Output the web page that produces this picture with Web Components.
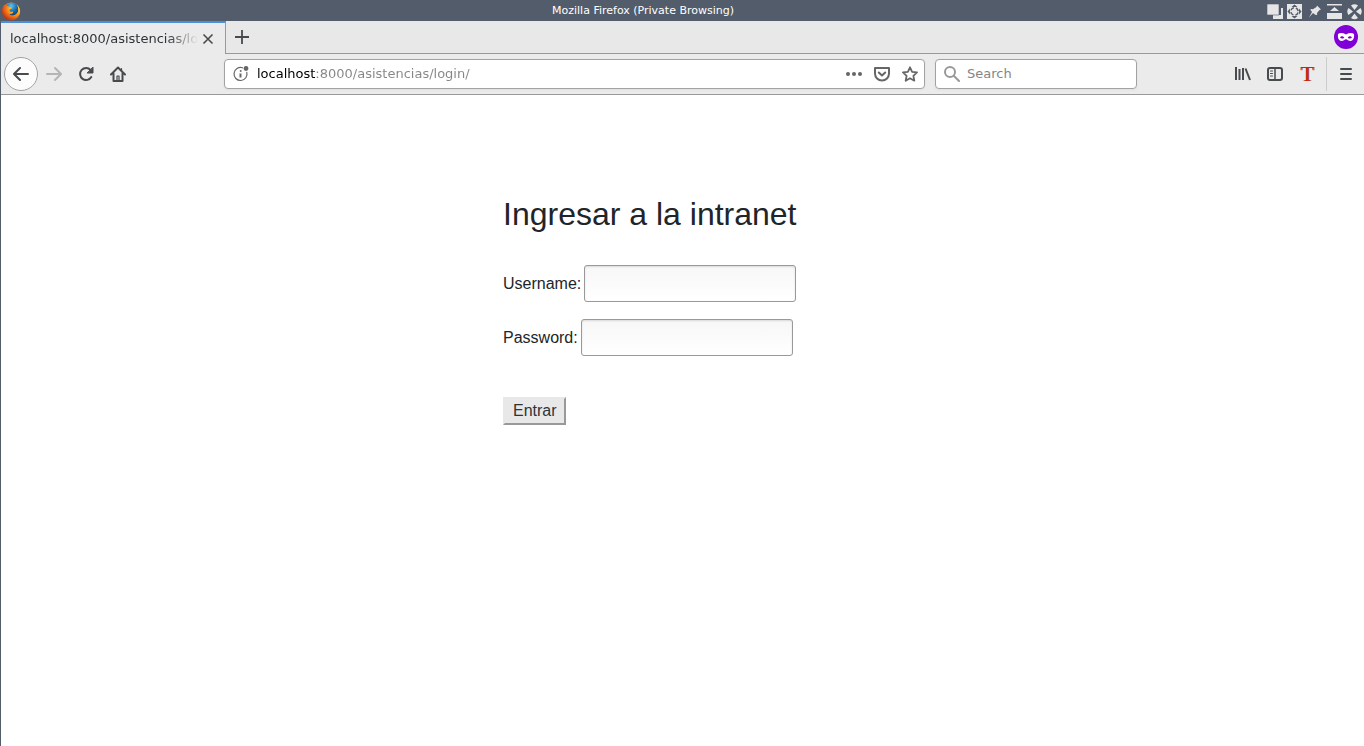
<!DOCTYPE html>
<html lang="es">
<head>
<meta charset="utf-8">
<title>Mozilla Firefox (Private Browsing)</title>
<style>
  html, body { height: 100%; }
  body { margin: 0; background: #fff; font-family: "DejaVu Sans", sans-serif; }
</style>
</head>
<body>
<browser-window>
  <title-bar slot="title">Mozilla Firefox (Private Browsing)</title-bar>
  <tab-strip slot="tabs">localhost:8000/asistencias/login/</tab-strip>
  <nav-toolbar slot="toolbar"></nav-toolbar>
  <login-page>Ingresar a la intranet</login-page>
</browser-window>
<script>
const define = (name, html) => customElements.define(name, class extends HTMLElement {
  constructor() {
    super();
    this.attachShadow({ mode: 'open' }).innerHTML = html;
  }
});

define('browser-window', `
  <style>
    :host { display: flex; flex-direction: column; min-height: 100vh; box-sizing: border-box; background: #535c6b; }
    main { flex: 1; display: flex; flex-direction: column; margin-left: 1px; background: #fff; }
    header { flex: none; }
    .chrome { margin-left: 1px; background: #ebebeb; }
  </style>
  <header><slot name="title"></slot><div class="chrome"><slot name="tabs"></slot><slot name="toolbar"></slot></div></header>
  <main><slot></slot></main>`);

define('title-bar', `
  <style>
    :host { display: grid; grid-template-columns: 97px 1fr 97px; align-items: center; height: 21px; background: #535c6b; color: #fff; font: 11px/22px "DejaVu Sans", sans-serif; }
    .name { text-align: center; padding-right: 78px; }
    .logo { width: 20px; height: 20px; margin-left: 1px; }
    nav { display: flex; }
    svg { display: block; }
    button { border: 0; padding: 0; background: none; width: 20px; height: 20px; flex: none; }
    nav svg { width: 20px; height: 20px; fill: #e6e6e6; }
  </style>
  <svg class="logo" viewBox="0 0 20 20">
    <defs>
      <radialGradient id="fox" cx=".75" cy=".25" r=".85"><stop offset="0" stop-color="#ffe04a"/><stop offset=".4" stop-color="#ffae24"/><stop offset=".7" stop-color="#ef6a16"/><stop offset="1" stop-color="#b53516"/></radialGradient>
      <radialGradient id="globe" cx=".45" cy=".25" r=".8"><stop offset="0" stop-color="#62c3ec"/><stop offset=".5" stop-color="#1d72b4"/><stop offset="1" stop-color="#103564"/></radialGradient>
    </defs>
    <circle cx="10" cy="10.500" r="9" fill="url(#fox)"/>
    <circle cx="10.800" cy="8.200" r="6.600" fill="url(#globe)"/>
    <path d="M1.300 9C1.200 6 2.500 4 3.300 3.400L4 5c1.600-.5 3 0 4 .8l3 .6c0 1-1.500 1.700-2.300 2.200-.5 1.700 1 2.900 3.300 1.900.8 1.400-1.400 3.300-3.800 2.400 2 2.500 6 2 8-.5 1.500-2 1.500-5 .2-8C21 8.500 19.500 15 14.500 17.800 7.500 21 1.500 16 1.300 9z" fill="url(#fox)"/>
  </svg>
  <div class="name"><slot></slot></div>
  <nav>
    <button aria-label="Escritorios"><svg viewBox="0 0 20 20"><path d="M8 7h8v11H6v-4h8V7z"/><path d="M0 3h12v11H0z" stroke="#535c6b" stroke-width=".600"/></svg></button>
    <button aria-label="Pantalla completa"><svg viewBox="0 0 20 20"><path d="M0 3h15v15H0z"/><path d="M7.500 3.500 10.500 6h-6zM7.500 17.500l3-2.500h-6zM.500 10.500 3 7.500v6zM14.500 10.500 12 7.500v6z" fill="#535c6b"/><circle cx="7.500" cy="10.500" r="3.700" fill="none" stroke="#535c6b" stroke-width="1.500" stroke-dasharray="3.800 2" stroke-dashoffset="-1"/></svg></button>
    <button aria-label="Fijar"><svg viewBox="0 0 20 20"><path d="m10 4.500 4 4-1.500.5-2.500 3 .2 2-2-.3L6 12l-4 4.500L5 11 3.500 9l.2-1 2.200.2L9.500 6z"/></svg></button>
    <button aria-label="Minimizar"><svg viewBox="0 0 20 20"><path d="M0 3h15v1.500H0zM7.500 6l4.500 4H3zM0 12h15v6H0z"/></svg></button>
    <button aria-label="Cerrar"><svg viewBox="0 0 20 20"><path d="M4 4.500q3.500-2.500 7 0L7.500 9zM4 17q3.500 2.500 7 0L7.500 12.500zM1.500 7q-2.500 3.500 0 7L6 10.500zM13.500 7q2.500 3.500 0 7L9 10.500z" fill="#e6e6e6"/></svg></button>
  </nav>`);

define('tab-strip', `
  <style>
    :host { display: flex; height: 33px; font: 13px/30px "DejaVu Sans", sans-serif; color: #2e3436; background: #e8e8e8; }
    .tab { display: flex; align-items: center; width: 225px; box-sizing: border-box; border-top: 2px solid #4a90d9; border-right: 1px solid #999; background: #ebebeb; padding-left: 9px; }
    .label { flex: 1; overflow: hidden; white-space: nowrap; -webkit-mask-image: linear-gradient(to left, transparent, #000 30px); mask-image: linear-gradient(to left, transparent, #000 30px); }
    .rest { flex: 1; display: flex; justify-content: space-between; align-items: center; border-bottom: 1px solid #999; padding-right: 6px; }
    button { border: 0; padding: 0; background: none; width: 32px; height: 32px; display: grid; place-items: center; }
    .close { width: 20px; margin-right: 7px; }
    .mask { flex: none; }
  </style>
  <div class="tab"><span class="label"><slot></slot></span><button class="close" aria-label="Cerrar pestaña"><svg width="12" height="12" viewBox="0 0 12 12"><path d="m1.500 1.500 9 9M10.500 1.500l-9 9" stroke="#474b4d" stroke-width="1.600"/></svg></button></div>
  <div class="rest">
    <button aria-label="Nueva pestaña"><svg width="14" height="14" viewBox="0 0 14 14"><path d="M7 0v14M0 7h14" stroke="#474b4d" stroke-width="1.800"/></svg></button>
    <svg class="mask" width="24" height="24" viewBox="0 0 24 24"><circle cx="12" cy="12" r="12" fill="#8000d7"/><path d="M4 9c2-1.500 5-1.200 8 .4 3-1.600 6-1.900 8-.4.5 3-.4 7-3.500 7-2.200 0-3-1.800-4.500-1.800S9.700 16 7.500 16C4.400 16 3.500 12 4 9z" fill="#fff"/><path d="M6 12.500c1.200-2 3.500-1.500 4.200.2-1.400 1.300-3.200 1.200-4.200-.2zM18 12.500c-1.200-2-3.500-1.500-4.200.2 1.400 1.300 3.200 1.200 4.200-.2z" fill="#8000d7"/></svg>
  </div>`);

define('nav-toolbar', `
  <style>
    :host { display: flex; align-items: center; height: 41px; box-sizing: border-box; border-bottom: 1px solid #999; padding: 0 2px 0 3px; background: #ebebeb; color: #474b4d; }
    button { border: 0; padding: 0; background: none; width: 32px; height: 32px; flex: none; display: grid; place-items: center; color: inherit; }
    svg { width: 16px; height: 16px; fill: none; stroke: currentColor; stroke-width: 2; stroke-linecap: round; stroke-linejoin: round; flex: none; }
    .back { width: 34px; height: 34px; border: 1px solid #a2a2a2; border-radius: 50%; background: #fcfcfc; }
    .forward { color: #b5b5b5; }
    .spring { flex: 90 90 90px; }
    .field { display: flex; align-items: center; box-sizing: border-box; height: 30px; min-width: 0; border: 1px solid #a2a2a2; border-radius: 4px; background: #fff; box-shadow: 0 1px 3px #0000000d; color: #666; }
    .url { flex: 701 701 701px; margin-right: 10px; padding: 0 0 0 8px; }
    .search { flex: 202 202 202px; padding: 0 8px; }
    input { flex: 1; min-width: 0; border: 0; padding: 0; outline: 0; height: 20px; background: none; font: 13px/20px "DejaVu Sans", sans-serif; margin-left: 8px; }
    .url input { color: transparent; background: linear-gradient(90deg, #000 59px, #858585 59px); -webkit-background-clip: text; background-clip: text; }
    .search input { margin-left: 7px; }
    .search input::placeholder { color: #858585; opacity: 1; }
    .url button { width: 28px; height: 28px; }
    .sep { width: 1px; height: 34px; background: #ccc; margin: 0 3px; }
    .letter { font: 22px/30px "Liberation Serif", serif; color: #c9250c; display: block; text-align: center; text-shadow: 1px 0 0 #9a4a40; }
  </style>
  <button class="back" aria-label="Atrás"><svg viewBox="0 0 16 16"><path d="M15 8H1.500M7 2 1 8l6 6"/></svg></button>
  <button class="forward" aria-label="Adelante"><svg viewBox="0 0 16 16"><path d="M1 8h13.500M9 2l6 6-6 6"/></svg></button>
  <button aria-label="Recargar"><svg viewBox="0 0 16 16"><path d="M13.300 11A6 6 0 1 1 12.600 4"/><path d="M15 1.500V7H9.500z" fill="currentColor" stroke-width="1"/></svg></button>
  <button aria-label="Inicio"><svg viewBox="0 0 16 16"><path d="m1 8.500 7-7 7 7M3.500 7.500V15h9V7.500"/><path d="M7 10h2v5H7zM11.500 2.500v2" stroke-width="1.200"/></svg></button>
  <span class="spring"></span>
  <div class="field url">
    <svg viewBox="0 0 16 16"><path d="M9.500 1.800A6.500 6.500 0 1 0 13.800 6.300" stroke-width="1.200"/><path d="M7.500 7.500v4" stroke-width="2" stroke-linecap="butt"/><circle cx="7.500" cy="5" r=".500" stroke-width="1"/><circle cx="13" cy="2.500" r="2.400" fill="currentColor" stroke="none"/></svg>
    <input type="text" aria-label="Dirección" value="localhost:8000/asistencias/login/">
    <button aria-label="Acciones de página"><svg viewBox="0 0 16 16" style="fill:currentColor;stroke:none"><circle cx="2" cy="8" r="2"/><circle cx="8" cy="8" r="2"/><circle cx="14" cy="8" r="2"/></svg></button>
    <button aria-label="Pocket"><svg viewBox="0 0 16 16"><path d="M1 2h14v5.500a7 7 0 0 1-14 0z"/><path d="m4.800 6.500 3.200 3 3.200-3"/></svg></button>
    <button aria-label="Marcador"><svg viewBox="0 0 16 16"><path d="m8 1.300 2.100 4.500 4.900.6-3.600 3.400.9 4.900L8 12.300l-4.300 2.400.9-4.900L1 6.400l4.900-.6z" stroke-width="1.800"/></svg></button>
  </div>
  <div class="field search">
    <svg viewBox="0 0 16 16" style="color:#999"><circle cx="6" cy="6" r="5"/><path d="m10 10 5 5"/></svg>
    <input type="text" aria-label="Buscar" placeholder="Search">
  </div>
  <span class="spring"></span>
  <button aria-label="Biblioteca"><svg viewBox="0 0 16 16" style="stroke-linecap:butt"><path d="M1 1v13M4.500 3v11M8 2v12M10.500 2.500l4.500 11.500"/></svg></button>
  <button aria-label="Barra lateral"><svg viewBox="0 0 16 16"><rect x="1" y="2" width="14" height="12" rx="2"/><path d="M8 2v12" stroke-width="1.500"/><path d="M3.500 5h2M3.500 7.500h2M3.500 10h2" stroke-width="1"/></svg></button>
  <button class="letter" aria-label="Complemento T">T</button>
  <span class="sep"></span>
  <button aria-label="Menú"><svg viewBox="0 0 16 16"><path d="M3 3h10M3 8h10M3 13h10"/></svg></button>`);

define('login-page', `
  <style>
    :host { display: block; padding-top: 100px; font: 16px/24px "Liberation Sans", sans-serif; color: #212529; }
    form { width: 359px; max-width: 100%; margin: 0 auto; }
    h1 { font-size: 32px; line-height: 38px; font-weight: 400; margin: 0 0 32px; }
    button { margin-top: 41px; padding: 0 7px 0 8px; height: 28px; border: 2px solid; border-color: #e8e8e8 #999 #999 #e8e8e8; background: #e8e8e8; font: inherit; color: #2e3436; display: block; line-height: 24px; }
  </style>
  <form onsubmit="return false">
    <h1><slot></slot></h1>
    <form-field label="Username:" type="text"></form-field>
    <form-field label="Password:" type="password"></form-field>
    <button type="submit">Entrar</button>
  </form>`);

customElements.define('form-field', class extends HTMLElement {
  connectedCallback() {
    this.attachShadow({ mode: 'open' }).innerHTML = `
      <style>
        :host { display: flex; align-items: center; margin-bottom: 17px; }
        input { box-sizing: border-box; width: 212px; height: 37px; margin: 0 0 0 3px; padding: 4px 8px; border: 1px solid #999; border-radius: 3px; font: inherit; background: linear-gradient(#f7f7f7, #fff); box-shadow: inset 0 1px 2px #0000001f; }
      </style>
      <label for="field">${this.getAttribute('label')}</label>
      <input id="field" type="${this.getAttribute('type')}">`;
  }
});
</script>
</body>
</html>
